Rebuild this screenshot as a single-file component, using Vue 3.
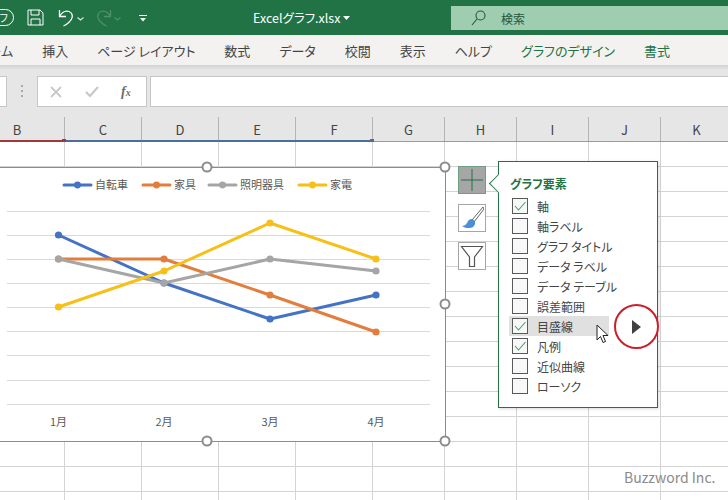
<template>
  <div class="window">
    <header class="titlebar">
      <span class="autosave"><span class="autosave-text">オフ</span></span>
      <svg class="qa save" width="17" height="17" viewBox="0 0 17 17" fill="none" stroke="#fff" stroke-width="1">
        <path d="M1 1h12l3 3v12H1z" />
        <path d="M4 1v5h8V1M4 16v-6h9v6" />
      </svg>
      <svg class="qa undo" width="16" height="18" viewBox="0 0 16 18" fill="none" stroke="#fff" stroke-width="1.3">
        <path d="M1.5 1v6.5H8" />
        <path d="M1.5 7.5C4 3 8 1.5 11 2.5c3.500 1.200 4 5 2.500 7.500C12 13 8.500 15.500 5.500 17" />
      </svg>
      <svg class="caret" width="7" height="4" viewBox="0 0 7 4" fill="none" stroke="#d7e8dd" stroke-width="1.200"><path d="M.5.5l3 2.500 3-2.500" /></svg>
      <svg class="qa redo" width="16" height="18" viewBox="0 0 16 18" fill="none" stroke="#4f9169" stroke-width="1.300">
        <path d="M14.500 1v6.500H8" />
        <path d="M14.500 7.500C12 3 8 1.500 5 2.500 1.500 3.700 1 7.500 2.500 10 4 13 7.500 15.500 10.500 17" />
      </svg>
      <svg class="caret dim" width="7" height="4" viewBox="0 0 7 4" fill="none" stroke="#4f9169" stroke-width="1.200"><path d="M.5.5l3 2.500 3-2.500" /></svg>
      <svg class="customize" width="8" height="7" viewBox="0 0 8 7" fill="#fff"><rect width="8" height="1" /><path d="M1 3h6L4 6.500z" /></svg>
      <span class="filename">Excelグラフ.xlsx</span>
      <svg class="file-caret" width="7" height="4" viewBox="0 0 7 4" fill="#fff"><path d="M0 0h7L3.500 4z" /></svg>
      <div class="search">
        <svg width="15" height="16" viewBox="0 0 15 16" fill="none" stroke="#26563b" stroke-width="1.100">
          <circle cx="9.500" cy="5.500" r="4.500" />
          <path d="M6 9l-5 6" />
        </svg>
        <span>検索</span>
      </div>
    </header>

    <nav class="tabs">
      <span v-for="tab in tabs" :key="tab.label" class="tab" :class="{ 'tab-chart': tab.chart }">{{ tab.label }}</span>
    </nav>

    <div class="ribbon-shadow"></div>

    <div class="formula-bar">
      <div class="name-box"></div>
      <span class="grip"></span>
      <div class="formula-buttons">
        <svg width="12" height="12" viewBox="0 0 12 12" stroke="#c8c8c8" stroke-width="1.800"><path d="M1 1l10 10M11 1L1 11" /></svg>
        <svg width="14" height="12" viewBox="0 0 14 12" fill="none" stroke="#c8c8c8" stroke-width="2.200"><path d="M1 6l4 4 8-9" /></svg>
        <span class="fx">f<small>x</small></span>
      </div>
      <div class="formula-input"></div>
    </div>

    <div class="col-header">
      <span v-for="col in columns" :key="col" class="col-label">{{ col }}</span>
      <span class="range range-red"></span>
      <span class="range range-blue"></span>
    </div>

    <main class="sheet">
      <div class="sheet-cols">
        <span v-for="col in columns" :key="col" class="sheet-col"></span>
      </div>

      <div class="chart">
        <svg class="chart-svg" width="446" height="276" viewBox="0 166 446 276">
          <line v-for="y in gridY" :key="y" x1="7" x2="430" :y1="y + 0.5" :y2="y + 0.5" stroke="#d9d9d9" stroke-width="1" />

          <g v-for="item in legend" :key="item.label">
            <line :x1="item.x" :x2="item.x + 27" y1="185" y2="185" :stroke="item.color" stroke-width="3" stroke-linecap="round" />
            <circle :cx="item.x + 13.500" cy="185" r="3.400" :fill="item.color" />
            <text :x="item.x + 31" y="189" class="legend-text">{{ item.label }}</text>
          </g>

          <g v-for="s in series" :key="s.name">
            <polyline :points="linePoints(s.values)" fill="none" :stroke="s.color" stroke-width="3" stroke-linejoin="round" />
            <circle v-for="(y, i) in s.values" :key="i" :cx="pointX[i]" :cy="y" r="3.600" :fill="s.color" />
          </g>

          <text v-for="(m, i) in months" :key="m" :x="pointX[i]" y="426" text-anchor="middle" class="axis-text">{{ m }}</text>

          <circle v-for="h in handles" :key="h[0] + '-' + h[1]" :cx="h[0]" :cy="h[1]" r="4.500" fill="#fff" stroke="#8c8c8c" stroke-width="2" />
        </svg>
      </div>

      <div class="side-buttons">
        <button type="button" class="side-btn side-btn-active">
          <svg width="22" height="22" viewBox="0 0 22 22" stroke="#217346" stroke-width="1"><path d="M11 0v22M0 11h22" /></svg>
        </button>
        <button type="button" class="side-btn">
          <svg width="24" height="24" viewBox="0 0 24 24">
            <path d="M23 1L12 14l2 2L24 3z" fill="#fff" stroke="#666" stroke-width="1" />
            <path d="M12 13c-3 0-4 2-5 4-1 2-3 3-5 3 2 2 8 3 11 1 2-2 3-4 1-7z" fill="#4a90d9" />
          </svg>
        </button>
        <button type="button" class="side-btn">
          <svg width="24" height="24" viewBox="0 0 24 24" fill="none" stroke="#555" stroke-width="1.200"><path d="M1.500 2.500h21L14.500 13v9.500h-5V13z" /></svg>
        </button>
      </div>

      <aside class="popup">
        <span class="popup-arrow"></span>
        <h3 class="popup-title">グラフ要素</h3>
        <ul class="popup-list">
          <li v-for="el in elements" :key="el.label" class="popup-row" :class="{ 'popup-row-hover': el.hover }">
            <span class="check">
              <svg v-if="el.checked" width="14" height="14" viewBox="0 0 14 14" fill="none" stroke="#3fa565" stroke-width="1.100"><path d="M2 7l3.500 4L12.500 3" /></svg>
            </span>
            <span class="popup-label">{{ el.label }}</span>
          </li>
        </ul>
      </aside>

      <span class="marker">
        <svg width="9" height="14" viewBox="0 0 9 14" fill="#404040"><path d="M0 0l9 7-9 7z" /></svg>
      </span>

      <svg class="cursor" width="14" height="21" viewBox="0 0 14 21" fill="#fff" stroke="#222" stroke-width="1">
        <path d="M1 1v15l3.500-3.500 2.500 6 2.500-1-2.500-6h5z" />
      </svg>

      <span class="watermark">Buzzword Inc.</span>
    </main>
  </div>
</template>

<script setup>
const tabs = [
  { label: 'ホーム' },
  { label: '挿入' },
  { label: 'ページ レイアウト' },
  { label: '数式' },
  { label: 'データ' },
  { label: '校閲' },
  { label: '表示' },
  { label: 'ヘルプ' },
  { label: 'グラフのデザイン', chart: true },
  { label: '書式', chart: true }
]

const columns = ['B', 'C', 'D', 'E', 'F', 'G', 'H', 'I', 'J', 'K']

const gridY = [211, 235, 259, 283, 307, 331, 355, 380, 404]
const pointX = [58.5, 164, 270, 376]
const months = ['1月', '2月', '3月', '4月']

const legend = [
  { label: '自転車', x: 64, color: '#4472c4' },
  { label: '家具', x: 143, color: '#e27d3c' },
  { label: '照明器具', x: 209, color: '#a5a5a5' },
  { label: '家電', x: 299, color: '#f6c018' }
]

const series = [
  { name: 'bike', color: '#4472c4', values: [235, 283, 319, 295] },
  { name: 'furniture', color: '#e27d3c', values: [259, 259, 295, 332] },
  { name: 'light', color: '#a5a5a5', values: [259, 283, 259, 271] },
  { name: 'appliance', color: '#f6c018', values: [307, 271, 223, 259] }
]

const handles = [
  [207, 167],
  [445, 167],
  [445, 304],
  [207, 441],
  [445, 441]
]

const elements = [
  { label: '軸', checked: true },
  { label: '軸ラベル' },
  { label: 'グラフ タイトル' },
  { label: 'データ ラベル' },
  { label: 'データ テーブル' },
  { label: '誤差範囲' },
  { label: '目盛線', checked: true, hover: true },
  { label: '凡例', checked: true },
  { label: '近似曲線' },
  { label: 'ローソク' }
]

const linePoints = values => values.map((y, i) => `${pointX[i]},${y}`).join(' ')
</script>

<style>
html,
body {
  margin: 0;
  overflow: hidden;
}
</style>

<style scoped>
.window {
  width: 728px;
  height: 500px;
  display: flex;
  flex-direction: column;
  overflow: hidden;
  background: #fff;
  font-family: "Noto Sans CJK JP", "Noto Sans", sans-serif;
  font-feature-settings: "palt";
}

.titlebar {
  height: 35px;
  flex: none;
  display: flex;
  align-items: center;
  background: #217346;
  color: #fff;
}

.autosave {
  width: 30px;
  height: 17px;
  margin-left: -16px;
  border: 1px solid #fff;
  border-radius: 10px;
  box-sizing: border-box;
  display: flex;
  align-items: center;
  justify-content: center;
}

.autosave-text {
  font-size: 10px;
  line-height: 1;
}

.qa {
  flex: none;
}

.save {
  margin-left: 13px;
}

.undo {
  margin-left: 14px;
}

.caret {
  margin-left: 3px;
  margin-top: 2px;
}

.redo {
  margin-left: 12px;
}

.caret.dim {
  margin-left: 2px;
}

.customize {
  margin-left: 18px;
  margin-top: 1px;
}

.filename {
  margin-left: 106px;
  width: 82px;
  font-size: 12.5px;
  white-space: nowrap;
}

.file-caret {
  margin-left: 8px;
  margin-top: 1px;
}

.search {
  margin-left: auto;
  width: 277px;
  height: 24px;
  margin-top: 1px;
  padding-left: 20px;
  box-sizing: border-box;
  display: flex;
  align-items: center;
  gap: 15px;
  background: #9fcdb0;
  color: #26563b;
  font-size: 12px;
}

.tabs {
  height: 30px;
  flex: none;
  display: flex;
  align-items: center;
  gap: 29px;
  margin-left: -24px;
  background: #f3f2f1;
  color: #444;
  font-size: 13px;
  white-space: nowrap;
}

.tab-chart {
  color: #217346;
}

.ribbon-shadow {
  height: 11px;
  flex: none;
  background: linear-gradient(#d2d2d2, #e6e6e6 5px);
}

.formula-bar {
  height: 31px;
  flex: none;
  display: flex;
  background: #e6e6e6;
}

.name-box {
  width: 6px;
  border: 1px solid #c6c6c6;
  border-left: 0;
  background: #fff;
}

.grip {
  width: 2px;
  height: 12px;
  margin: 9px 9px 0 14px;
  background: repeating-linear-gradient(#a8a8a8 0 2px, transparent 2px 5px);
}

.formula-buttons {
  width: 110px;
  margin-left: 5px;
  padding-left: 12px;
  box-sizing: border-box;
  display: flex;
  align-items: center;
  gap: 23px;
  border: 1px solid #c6c6c6;
  background: #fff;
}

.fx {
  font-family: "Liberation Serif", serif;
  font-style: italic;
  font-weight: 700;
  font-size: 14px;
  color: #6e6e6e;
  margin-left: -1px;
}

.fx small {
  font-size: 10px;
}

.formula-input {
  flex: 1;
  margin-left: 3px;
  border: 1px solid #c6c6c6;
  border-right: 0;
  background: #fff;
}

.col-header {
  position: relative;
  height: 35px;
  flex: none;
  display: grid;
  grid-template-columns: 95px repeat(4, 77px) repeat(5, 72px);
  margin-left: -30px;
  padding-top: 10px;
  box-sizing: border-box;
  background: #e6e6e6;
  border-bottom: 1px solid #9b9b9b;
}

.col-label {
  display: flex;
  align-items: center;
  justify-content: center;
  border-right: 1px solid #b4b4b4;
  color: #444;
  font-size: 13px;
}

.range {
  position: absolute;
  bottom: -1px;
  height: 2px;
}

.range::after {
  content: "";
  position: absolute;
  right: -2px;
  top: -1px;
  width: 4px;
  height: 3px;
  background: inherit;
}

.range-red {
  left: 0;
  width: 94px;
  background: #a4373a;
  z-index: 1;
}

.range-blue {
  left: 94px;
  width: 308px;
  background: #4a6f9e;
}

.sheet {
  position: relative;
  flex: 1;
  overflow: hidden;
  background: linear-gradient(to top, #d4d4d4 1px, transparent 1px) 0 0 / 100% 25px;
}

.sheet-cols {
  height: 100%;
  display: grid;
  grid-template-columns: 95px repeat(4, 77px) repeat(5, 72px);
  margin-left: -30px;
}

.sheet-col {
  border-right: 1px solid #d4d4d4;
}

.chart {
  position: absolute;
  left: -2px;
  top: 25px;
  width: 446px;
  height: 273px;
  border: 1px solid #8c8c8c;
  background: #fff;
}

.chart-svg {
  position: absolute;
  left: 1px;
  top: -2px;
  overflow: visible;
}

.legend-text,
.axis-text {
  font-size: 11px;
  fill: #595959;
}

.side-buttons {
  position: absolute;
  left: 458px;
  top: 24px;
  display: flex;
  flex-direction: column;
  gap: 10px;
}

.side-btn {
  width: 28px;
  height: 28px;
  padding: 0;
  display: flex;
  align-items: center;
  justify-content: center;
  border: 1px solid #a6a6a6;
  background: #fff;
}

.side-btn-active {
  background: #a6a6a6;
  border-color: #6f9f81;
}

.popup {
  position: absolute;
  left: 498px;
  top: 19px;
  width: 160px;
  height: 247px;
  padding: 13px 0 0 11px;
  box-sizing: border-box;
  border: 1px solid #217346;
  background: #fff;
  box-shadow: 1px 1px 3px rgba(0, 0, 0, 0.15);
}

.popup-arrow {
  position: absolute;
  left: -10px;
  top: 14px;
  width: 15px;
  height: 15px;
  transform: rotate(45deg) scale(0.9);
  background: #fff;
  border-left: 1px solid #217346;
  border-bottom: 1px solid #217346;
  box-sizing: border-box;
  margin-left: 2px;
}

.popup-title {
  margin: 0;
  font-size: 12px;
  line-height: 18px;
  font-weight: 700;
  color: #217346;
}

.popup-list {
  list-style: none;
  margin: 3px 0 0;
  padding: 0;
}

.popup-row {
  height: 20px;
  width: 100px;
  margin-left: -1px;
  padding-left: 3px;
  box-sizing: border-box;
  display: flex;
  align-items: center;
  gap: 9px;
  white-space: nowrap;
}

.popup-row-hover {
  background: #e0e0e0;
}

.check {
  width: 16px;
  height: 16px;
  flex: none;
  box-sizing: border-box;
  display: flex;
  align-items: center;
  justify-content: center;
  border: 1px solid #595959;
  background: #f8f8f8;
}

.popup-label {
  font-size: 12px;
  color: #444;
}

.marker {
  position: absolute;
  left: 614px;
  top: 162px;
  width: 45px;
  height: 45px;
  box-sizing: border-box;
  display: flex;
  align-items: center;
  justify-content: center;
  border: 2.500px solid #cc1f2a;
  border-radius: 50%;
}

.cursor {
  position: absolute;
  left: 596px;
  top: 182px;
}

.watermark {
  position: absolute;
  left: 624px;
  top: 325px;
  font-size: 14px;
  line-height: 20px;
  color: #8a8a8a;
  white-space: nowrap;
}
</style>
